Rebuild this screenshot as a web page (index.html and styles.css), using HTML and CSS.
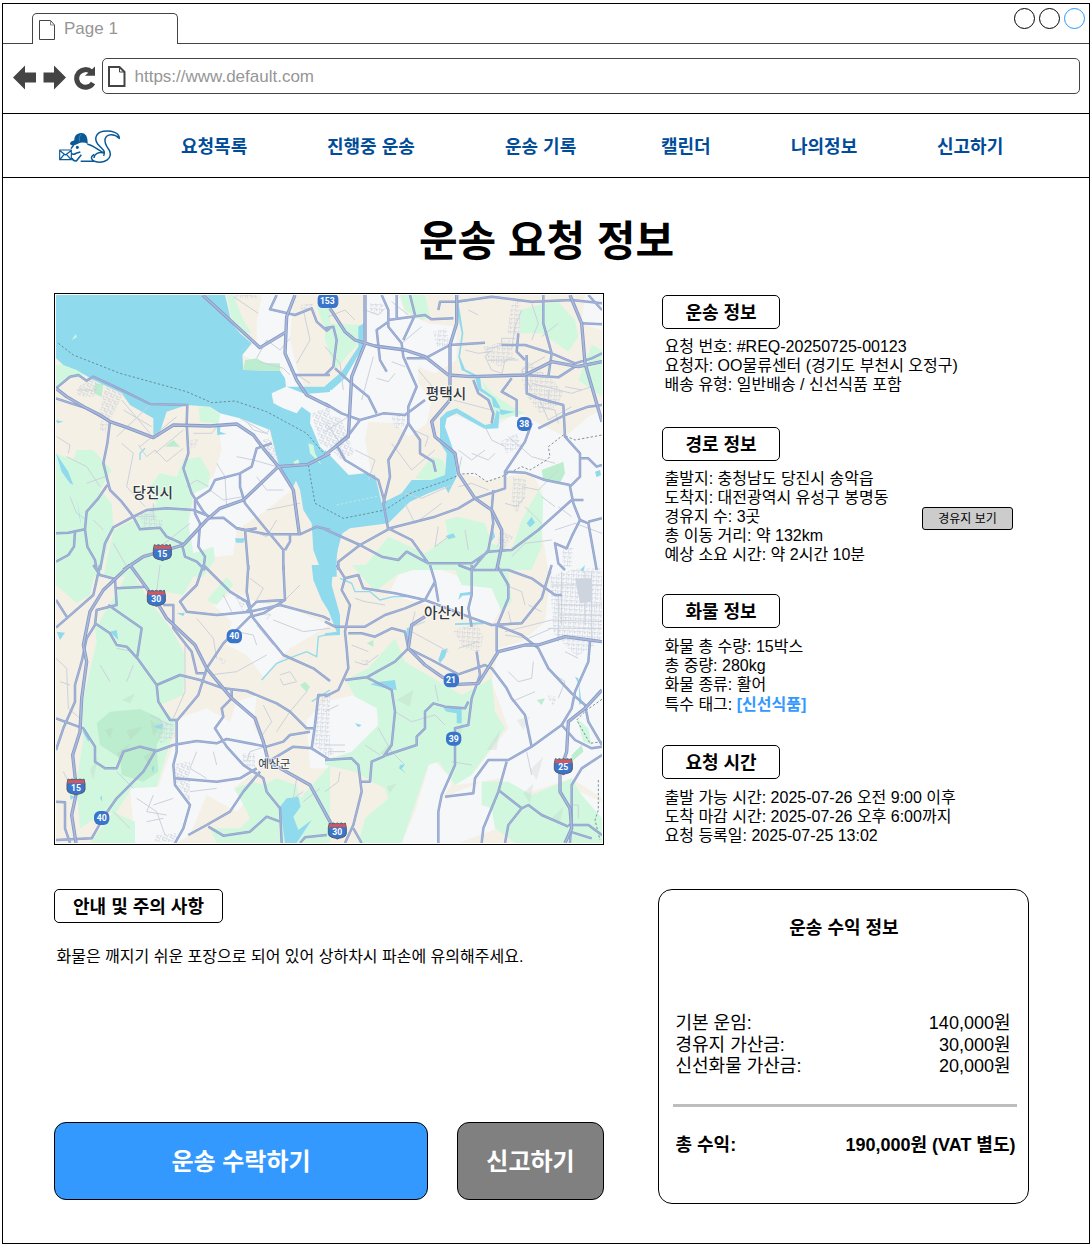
FILE: index.html
```html
<!DOCTYPE html>
<html lang="ko">
<head>
<meta charset="utf-8">
<title>운송 요청 정보</title>
<link rel="stylesheet" href="styles.css">
</head>
<body>
<div class="window">
  <header class="tabs">
    <div class="tabs-lead"></div>
    <div class="tab">
      <svg class="tab-icon" width="16" height="20" viewBox="0 0 16 20"><path d="M.5.5H11.500L15.500 5V19.500H.5Z"/><path class="fold" d="M11.500.5V5H15.500"/></svg>
      <span>Page 1</span>
    </div>
    <div class="window-controls"><i></i><i></i><i class="active"></i></div>
  </header>
  <div class="toolbar">
    <svg class="tool-icons" width="84" height="26" viewBox="0 0 84 26">
      <path d="M0 13.500L12 1.500V8.500H23V18.500H12V25.500Z"/>
      <path d="M53 13.500L41 1.500V8.500H30.500V18.500H41V25.500Z"/>
      <path class="reload" d="M80 19A8.800 8.800 0 1 1 78.500 8"/>
      <path d="M82 2.500V11.800H72Z"/>
    </svg>
    <div class="address">
      <svg class="page-icon" width="18" height="21" viewBox="0 0 18 21"><path d="M1 1H11.500L16.500 6V20H1Z"/><path class="fold" d="M11.500 1V6H16.500"/></svg>
      <span>https://www.default.com</span>
    </div>
  </div>
  <nav class="nav">
    <svg class="logo" width="64" height="38" viewBox="24 19 192 114">
      <path class="solid" d="M60 69C62 60 69 62 73 58C73 44 82 37 95 37C107 38 114 48 113 70C103 64 93 65 82 70C73 75 63 76 60 69Z"/>
      <path class="seam" d="M93 39Q86 49 88 63"/>
      <path d="M71 73L63 84M64 98Q70 104 78 98L91 94M66 112Q69 122 79 121L94 102M92 122H133Q116 112 132 101M112 71C132 74 142 88 162 97C146 93 133 99 132 112M133 122C168 132 186 111 179 91C171 78 163 70 165 56C170 39 192 38 208 53C208 35 182 28 160 32C139 36 131 53 143 70C155 85 169 89 161 106"/>
      <circle cx="82" cy="80" r="2.500"/>
      <path class="mail" d="M29 88H64V117H29ZM31 91L46 103L62 91M31 115L42 102M62 115L50 102"/>
    </svg>
    <a>요청목록</a><a>진행중 운송</a><a>운송 기록</a><a>캘린더</a><a>나의정보</a><a>신고하기</a>
  </nav>
  <h1>운송 요청 정보</h1>
  <main class="content">
    <div class="map">
      <svg width="546" height="548" viewBox="18 15 1638 1644" preserveAspectRatio="none">
        <defs>
          <pattern id="blocks" width="19" height="16" patternUnits="userSpaceOnUse" patternTransform="rotate(24)"><path class="block" d="M0 0H19M0 0V16M10 0V9H19"/></pattern>
          <pattern id="streets" width="15" height="13" patternUnits="userSpaceOnUse" patternTransform="rotate(4)"><path class="block" d="M0 0H15M0 0V13M7 0V8"/></pattern>
          <g id="interstate"><path class="shield" d="M-24 -24Q-18 -19 -12 -24Q-6 -19 0 -24Q6 -19 12 -24Q18 -19 24 -24L27 -10V8Q26 17 13 20Q5 21 0 24Q-5 21 -13 20Q-26 17 -27 8V-10Z"/><path class="shield-top" d="M-23 -23Q-12 -17 0 -23Q12 -17 23 -23L26 -11H-26Z"/></g>
          <g id="roads">
            <g>
              <path d="M680 15L660 58L735 75L785 55L800 95L830 122L840 115M735 255H840"/>
              <path d="M18 295L60 260L85 255L110 272L130 260L215 300L300 342L412 345L410 400L415 490L400 535L425 610L460 665L480 685L520 683L560 715L650 733L750 733L800 710L840 720"/>
              <path d="M18 325L110 355L180 395L172 460L160 520L180 600L215 635L250 680L270 718L330 713L350 740L395 760L405 800L440 815L465 840"/>
              <path d="M18 730L55 728L105 718L110 665L145 625L172 585M105 718L112 770L135 810L140 840M150 840L165 760L190 712L240 685L290 660L350 655L430 660L480 680"/>
              <path d="M665 460L620 475L605 530L570 550L495 570L480 600L435 630V670L450 700L445 770L465 800L460 840M570 550V590L585 640L650 720L700 780V840M560 715L585 720L620 715M585 720L595 840M720 735V755L705 780M18 815L55 795L72 770L75 725"/>
            </g>
            <g transform="translate(825 0)">
              <path d="M170 15L190 60V110L230 160L235 200L275 290L250 350V400L220 460L190 510L195 560L175 640L190 720M190 95L155 120L165 210L185 245M215 15V85M190 90L300 75L320 88L385 85M255 15L270 75L235 150"/>
              <path d="M340 60L345 35L395 35L500 20L620 35L740 30L831 40M375 165L480 158M375 165L300 205H245M530 165H600L680 190L750 220L800 205L831 190M655 15V100L680 190L670 260M600 255L700 262L750 230L831 215"/>
              <path d="M605 195V310L640 325L715 345L720 440L765 490V560L735 590L745 640L765 690L790 700L815 840M560 265L530 305L575 330V380M0 340L50 370L105 390L175 370L240 375L300 330M105 390L75 430L35 465L60 510L160 570L180 640"/>
              <path d="M30 235L80 280L130 320L155 370M0 115L25 110L35 150L25 230L0 255M250 400L285 450V490L325 515L332 545M620 400L600 455L540 545V595L450 625L400 655L330 680L195 715L105 765L40 815V840"/>
              <path d="M540 545L600 548L660 570L735 585M640 415L720 375L790 350L831 345M0 718L105 765L170 800L220 810L245 785L310 820L440 820L490 785M190 715L260 750L310 820M505 600L500 660L505 700L490 780L440 840"/>
              <path d="M490 785L560 780L640 720L740 630H775M765 690L740 740L725 775L690 760L700 820L720 840M790 695L831 685M445 270L460 310L490 330L505 370L500 400M580 130L575 185L600 210M770 100L831 103M790 15L831 60M768 505H790L815 530L831 525"/>
            </g>
            <g transform="translate(0 825)">
              <path d="M130 0L150 30L195 42L200 120L140 135L135 180L110 220L95 290L75 360V410L40 490L18 555M150 0L130 90L50 160L18 188M18 105L50 155M200 70L290 65"/>
              <path d="M175 120L275 190L262 275M135 175L180 205L200 240L230 245L262 280L320 360L325 410L360 465H380V560L370 600L375 660L420 720L400 790L375 834"/>
              <path d="M320 360L390 330L450 345L520 370L590 378L680 415L720 440L770 490H790M460 0L440 60L390 110L410 140L500 150L600 140L690 120L820 155L840 165M460 0L540 80L590 110L610 160L700 270L790 310L840 348"/>
              <path d="M595 0L590 80L605 150M700 0L705 105L620 110L590 140M705 105L640 145L600 155L520 235L470 310L445 390L380 468M340 120H370V190L425 260L440 325H470"/>
              <path d="M545 370V400L515 430L520 455L495 490L530 545L580 600L640 640L650 680L690 730L695 834M18 460L100 490L135 545V590L165 610L200 610L220 560L270 545L320 558L370 540L440 528L500 535L530 522L650 545L700 530L720 510L780 500"/>
              <path d="M375 640L500 650L570 640L620 610M315 560L280 620L200 700L165 750L125 820L18 825M18 710L45 712V790L60 834M630 620L580 680L540 740L470 780L415 810M475 785L520 812L600 800L650 755L690 770M655 590L730 545L785 550L840 585M840 390H805L795 480L785 550M750 834L765 817L830 810"/>
            </g>
            <g transform="translate(825 825)">
              <path d="M0 170L30 185H120L180 150L240 130L300 105L330 50L315 0M35 0L60 40L100 30L115 70L210 85L300 105L340 120L430 155L500 180L590 175L650 100L680 0M330 50L340 110"/>
              <path d="M60 40L50 75L75 120L60 200L65 250L70 310L40 375L0 395M70 205H110L150 215L200 190L240 200L250 250L210 290L125 337L60 345M250 250L320 285L400 328L480 300L500 310L545 370L560 400L600 450L620 545"/>
              <path d="M440 0V90L430 130L440 185M400 0L440 15H550L620 40L690 90H710M515 0L550 60V100L515 185V260M515 180L590 210L640 250L670 310L740 385L780 420L790 470L831 540"/>
              <path d="M455 260L465 330L440 400L430 480L390 490V600L350 690L340 740V834M360 695L445 685L450 640L490 585H550L620 545L710 480L740 430L750 380L790 290L795 230"/>
              <path d="M125 337L200 375L210 440L200 540L175 575L140 590L135 650H110M175 573L275 540V515L300 490V440L325 415L360 425L420 430L430 410M0 585L80 580L100 600L110 680L85 780L60 834"/>
              <path d="M545 590L520 680L475 790L470 834M520 675L590 730L550 780L540 834M590 730L610 720L650 750L730 785M831 570L770 610L740 660V760L735 834M730 780H790L831 810M710 480L750 525L800 550L831 545M735 800L800 820M85 790L110 834M0 745L30 790"/>
            </g>
          </g>
          <g id="highways">
            <path d="M458 15L630 173L710 125M735 15L710 80L705 190L740 270L770 315L840 350M18 295L50 320L110 355L150 375L180 395L230 412L310 443L370 405L480 408L560 402L610 435L640 475L690 535L730 600L748 733"/>
            <path d="M840 490L775 523L685 530L580 630L510 655L470 690L400 765L280 800L220 840"/>
            <path transform="translate(825 0)" d="M15 55L60 125L90 150L150 168L240 180L300 200L370 255L440 260L600 255L680 215L760 230L831 215M120 15V160L80 260L70 440L0 495M395 15V100L375 165V330L320 395L330 440L390 490L400 550L450 625L500 660L530 720V770L515 840M735 15L770 100L780 220L831 395"/>
            <path transform="translate(0 825)" d="M240 0L160 75L120 140L100 240L110 290L95 400L90 500L68 570L80 680L65 750L78 834M240 0L320 110L350 160L435 240L470 310L545 400L615 460L640 530L655 590L780 660L840 770"/>
            <path transform="translate(825 825)" d="M300 155L260 180L250 250L300 300L350 335L400 358L460 355L520 260L600 240H640L720 215L831 230M831 375L780 430L730 470L725 560L705 620V680L735 730L740 790L720 834"/>
          </g>
        </defs>
        <rect class="land" width="1680" height="1680"/>
        <g class="plain">
          <path d="M635 15H730L720 150L740 230L770 310H860V560L700 370L655 310L700 240L620 215L577 195L620 150V100ZM510 370L570 385L665 420L660 440L690 520L725 600L650 660L560 720L550 795L500 800L430 790L415 700L435 610L490 560L515 480L505 400Z"/>
          <g transform="translate(825 0)"><path d="M120 15H220L240 70L310 100L395 110V210L330 250L280 230L280 280L320 330L305 400L250 440L210 400L130 395L120 450L140 560L80 560L0 480V300L100 210ZM355 370L420 385L500 415L580 365L640 400L720 440L790 380L831 360V840H670L650 720V600L620 550L540 560L490 570L410 550L370 480Z"/><path d="M780 15H831V120L770 100Z"/></g>
          <g transform="translate(0 825)"><path d="M490 120L550 80L620 110L720 130L840 180L720 250L640 335L590 270L530 240L545 170ZM385 460L470 430L540 470L560 410L620 390L610 480L650 560L640 600L550 670L580 720L560 740L470 690L420 810L380 834H255L240 670L325 665L370 540ZM770 465L840 390V610H780Z"/></g>
          <g transform="translate(825 825)"><path d="M190 90L220 30L310 0L390 30L440 60L500 70L530 130L500 180L350 130ZM0 410L90 390L160 430L155 520L85 560L0 585ZM310 570L350 600L380 660L350 700L470 650L520 640L590 690L740 640L831 700V0H680L660 170L590 230L520 250L500 350L550 490L440 630ZM230 834L270 740L320 575L390 660L475 650L520 790L400 834ZM740 670L831 710V834H750Z"/></g>
        </g>
        <g class="green">
          <path d="M530 15H550L580 90L605 130L570 130L545 90ZM18 225L60 220L110 250L80 265L60 260L18 295ZM445 350L480 350L510 375L505 402L450 395ZM18 490L70 510L80 480L130 480L185 540L150 600L185 640L190 700L150 860H18ZM300 590L330 550L380 560L400 510L450 500L480 550L475 590L430 610L415 700L430 790L490 770L495 810L460 860H160L190 720L270 680L320 640ZM800 50L840 20V120L825 120Z"/>
          <g transform="translate(825 0)"><path d="M225 15H300L315 80L290 90L240 60ZM0 100L110 105L100 160L30 240L0 150ZM585 60L640 45L700 35L750 90L760 140L730 185L680 150L650 130L585 130ZM800 165L831 180V320L760 270ZM270 565L320 500L355 510L365 560L330 575ZM470 270L500 310L560 350L600 370L510 390L490 330ZM360 690L400 680L480 700L500 760L560 780L590 690L640 600L655 620L650 770L620 840H110L190 740L300 790L370 740Z"/></g>
          <g transform="translate(0 825)"><path d="M18 0H140L120 90L80 115L18 60ZM240 0H450L400 90L290 70ZM190 100L240 10L300 110L370 200L405 270L400 390L330 420L380 470L320 665L245 670L200 740L150 750L90 790L78 660L100 520L95 420L140 230L135 190ZM470 105L530 35L550 60L500 120ZM120 834L190 740L255 770V834ZM555 670L610 650L640 660L680 640L740 660L750 700L840 600V834H500L480 790L570 790L600 760Z"/></g>
          <g transform="translate(825 825)"><path d="M80 0H310L215 30L150 80ZM430 0L550 20L560 110L530 140L500 70L410 60L390 15ZM60 345L130 310L210 220L240 290L350 355L410 390L500 340L510 440L540 490L440 630L390 660L340 590L310 600L230 834H100L120 760L190 700L180 670L140 650L90 620L0 600V585L80 560L160 480L155 430L90 395ZM470 650L550 650L620 690L740 640L770 690L831 760V834H570L510 790L500 730L470 720ZM755 460L790 490L800 540L775 530Z"/></g>
        </g>
        <g class="park">
          <path d="M345 470L370 450L390 470ZM135 280L160 282L155 322L132 310Z"/>
          <g transform="translate(825 0)"><path d="M650 540L715 515L720 550L705 578L655 570Z"/></g>
          <g transform="translate(0 825)"><path d="M140 475L180 440L270 432L330 460L345 490L320 540L325 620L280 650L215 630L210 580L150 540ZM750 360L765 350L780 365L770 382Z"/></g>
          <g transform="translate(825 825)"><path d="M740 570L770 540L775 560L740 590ZM635 405L660 400L650 420ZM125 235L145 225V245Z"/></g>
        </g>
        <g class="relief"><path d="M215 1230L255 1210L240 1240ZM165 1320L190 1310L180 1345ZM230 1320L280 1310L240 1350ZM300 1290L330 1310L310 1340ZM200 1390L240 1360L210 1420ZM120 1440L145 1400L130 1470ZM280 1400L310 1380L300 1430ZM1040 1230L1090 1200L1080 1250ZM1310 1380L1350 1320L1340 1380ZM1210 1330L1240 1300L1230 1350ZM1400 1290L1440 1280L1420 1320ZM1440 1440L1480 1400L1460 1470ZM1010 1490L1040 1480L1020 1510ZM1420 1510L1450 1480L1440 1540ZM1500 1590L1540 1550L1530 1600ZM990 1390L1020 1360L1010 1400Z"/></g>
        <g class="water">
          <path d="M18 15H525L545 100L570 130L605 160L577 195L580 240L690 243L705 265L708 290L665 310L670 340L700 355L740 370L755 350L782 370L780 400L810 470L830 490L900 560L885 700L860 790V860H820L790 780L785 700L760 660L750 600L738 572L725 600L705 560L685 520L660 420L570 385L510 370L480 350L410 345L350 365L325 440H310V385L240 345L215 310L130 270L80 240L40 225L18 205ZM710 290H840V306L765 312Z"/>
          <path d="M18 490L55 545L70 585L60 580L35 545ZM80 625L95 710L88 680ZM500 400L512 405L510 425L530 432L502 435ZM555 745H585L580 758H558ZM18 390L40 395L22 400Z"/>
          <g transform="translate(825 0)"><path d="M0 480L70 555L120 550L150 555L170 640L230 610L260 570L320 570L360 555L365 490L345 460L345 385L365 365L395 355L430 375L480 405L505 400L515 360L530 375L570 365L535 360L505 350L500 325L460 300L450 260L410 240L400 200L410 130L395 60L400 30L525 18L400 38L405 65L415 130L405 200L420 238L465 260L470 295L510 325L525 350L520 415L480 417L430 390L395 370L365 385L360 410L385 480L395 560L370 610L360 590L310 610L255 635L190 700L75 715L45 735L35 800L0 860ZM0 300L0 288L50 245L100 170V110L116 100L114 170L60 265L20 300ZM605 700L620 680L630 698L615 712ZM362 738L385 730L392 742L370 748ZM500 700L510 740L495 760ZM810 545L825 540L828 555L815 562Z"/></g>
          <path d="M785 825H840V970L815 930L790 870ZM690 1550L710 1525L745 1520L752 1550L730 1580L745 1620L785 1590L740 1659H705ZM310 1310L340 1300L335 1318ZM380 970L405 968L400 978ZM20 1025L45 1028L30 1050ZM180 1025L200 1020L205 1050L195 1040ZM95 1320L122 1345L115 1355ZM305 1435L312 1425L310 1450ZM150 1525L155 1515L157 1535ZM60 1515L75 1520L62 1530Z"/>
          <g transform="translate(825 825)"><path d="M0 0H25L20 60L45 150L45 210L0 212V205L35 200L0 110ZM340 285L350 255L368 250L360 275L345 295ZM400 105L405 85L438 80L435 90L412 92ZM355 430H410V475L395 475V445L365 440ZM135 358L165 350L210 345L215 375L190 372ZM225 600L240 598L230 612L245 627L222 610ZM245 190L258 185L255 220L245 220ZM390 175L475 172V178L390 180ZM90 475L110 480L100 487ZM750 335L760 340L770 415L763 420L762 360ZM765 15L780 0L775 20Z"/></g>
          <path class="stream" d="M635 1170L680 1120L730 1100L770 1085L800 1100L805 1040L840 1032M870 865L905 880L915 905L960 905L990 930L1030 920L1070 920M270 510V490L285 475M785 1235L840 1200"/>
        </g>
        <path class="park" d="M580 240L585 210L620 205L645 220H690V243Z"/>
        <g class="green"><path d="M65 150L78 132L80 142ZM775 460L790 465L795 490L815 525L780 490ZM730 515L745 508L748 522L735 530Z"/></g>
        <g class="minor">
          <path d="M215 460L250 490L230 590L285 650M215 330L300 430M80 300L140 300M220 360L305 410M300 345L200 440M270 470L380 380M315 490L400 420M265 465L290 500L315 480L350 515L400 475M430 430H485L500 410M410 590L440 570L475 590M500 520L525 560L530 650M560 500L610 510L680 530M650 660L750 640M600 720L650 740L680 690M60 620L80 670L110 690M50 500L110 530L150 590M330 770L420 700M190 760L230 830M570 385L650 430L660 415M590 395L610 420L655 432M620 205L650 150L690 180L720 145M720 240L780 280M760 60L780 150L740 220M550 20L625 70M630 215L700 235L720 255M20 440L60 465L55 490M110 580L165 560M310 640V690M250 680H320M130 690L160 720M480 600L520 630L580 620M620 560L650 600L700 600"/>
          <g transform="translate(825 0)"><path d="M200 35L250 75M290 110L230 160M0 170L45 220L55 300M110 330L145 200M480 180L530 165V145H570M490 210H580M500 180L480 200L500 240L530 250M590 60L570 110L560 180M620 40L640 100L620 150M700 100L650 140M385 330L500 360M400 480L440 510L480 480M440 490L490 510L510 490M410 500L400 550M550 440L620 500L690 520M240 640L270 700L350 640M340 710L330 770L370 740M590 590L640 600L700 540M600 650L650 700M690 720L750 700L831 730M90 480L150 510L130 570M200 460L260 540L330 480M280 240L330 300L400 320M620 280L740 310L800 290M640 320L670 390L740 350M660 200L590 240L620 300M560 800L600 760L680 750M10 80L60 60L90 90M670 300V340M480 410L500 450L540 470M490 600L440 580L400 590M240 610L290 625L380 585M0 425L70 380M0 395L50 465M120 60L160 75L180 55M155 265L190 275L210 250M200 215L240 230M265 420L310 440L300 470M430 60L460 75M420 180L460 190L500 185M530 255L540 210L570 205M640 350L690 360L700 400M720 290L770 300M700 650L740 680M650 620L690 650M420 720L430 780M540 640L575 650L600 620"/></g>
          <g transform="translate(0 825)"><path d="M18 280L50 310L55 430L90 460M330 0L320 80M200 250L250 260M405 240V380L370 460M440 160L490 220L500 280M480 330L560 320L650 270M620 180L670 240M670 165L760 200L840 190M690 120L750 60M690 330L720 320L740 350L700 360L690 340M770 380L720 440L680 500M640 420L665 470L630 520M300 450L360 480M260 700L320 740L345 810M310 690L290 740L350 750M420 680L500 670M600 40L640 70L620 105M660 540L600 560L590 590M740 640L730 700L760 680M760 710L810 670M190 740L240 790M250 670L200 620M440 560L420 610L470 640M40 620L60 660M490 560L500 600M310 720L370 700M290 770L340 760M520 90L545 140M560 200L610 210L620 240M150 300L180 350M250 300L230 350M30 350L60 360"/></g>
          <g transform="translate(825 825)"><path d="M90 100L120 110L180 120M250 190L300 170M260 200L370 260M270 140L250 230M400 250L460 230M540 200L680 165L831 170M540 210L610 220L680 190M550 140L560 180M610 120L650 140M550 320L580 350L620 340L625 290M630 380L560 410M605 560L620 630M210 440L260 470L330 450L360 480M160 490L200 560L240 600M120 540L165 570M380 590L440 600M0 680L40 650L45 620M330 360L340 410M0 540H60M10 560H60M700 90V230M710 20V180M700 120H831M700 150H831M680 60H831M670 190H831M800 20V230M780 20V180M680 20L660 60M740 720H760V760M90 290L120 300L160 270M80 240L130 260M540 60L590 80L600 120M720 260L760 280M690 330L720 350L700 400M0 440L40 420"/></g>
        </g>
        <g class="city-a"><path d="M90 285L130 268L145 285L130 320L80 318ZM165 285L220 310L180 390L150 365ZM785 370L840 350V480L810 460ZM635 450L660 445L690 515L660 510ZM380 1420L420 1415L420 1540L370 1460ZM555 920L590 930L580 965ZM315 1635L380 1630V1655H315ZM825 380L870 380L915 490L870 510L825 450ZM1350 720L1390 740L1360 780L1340 770Z"/></g>
        <g class="city-b"><path d="M270 670L310 655L320 690L340 690L335 715L280 715ZM150 390L175 400L165 430L150 420ZM420 450L445 448L435 475H420ZM555 15H620V25H555ZM750 45L790 40L780 60H755ZM960 40H1000V70H960ZM1150 125L1190 115L1200 170H1160ZM1025 380L1070 370L1060 410L1035 415ZM1350 455L1400 430L1415 470L1370 490ZM1385 40L1410 30V140L1370 130ZM1300 170L1380 150L1390 200L1350 230L1310 210ZM1430 210L1510 270L1540 310L1520 350L1470 370L1430 320L1410 250ZM1390 560L1430 570L1425 620L1400 670L1385 640ZM1535 780L1570 770L1565 830H1540ZM790 1300L815 1220H840V1400L795 1370ZM575 1390H615V1430H580ZM320 1290L370 1300L375 1340L330 1360ZM1210 1020L1280 1000L1300 1040L1290 1085L1240 1075ZM1500 860L1580 835H1656V1050L1580 1100L1510 1030ZM640 960L665 975L650 990ZM500 1100L530 1110L520 1125ZM825 1370H850V1400H825ZM1490 1215L1520 1220L1510 1250ZM935 1110L955 1110V1125H935Z"/></g>
        <path class="downtown" d="M1575 865H1625V935L1590 940Z"/>
        <path class="ferry" d="M25 160L70 195L210 250L410 305L485 338L555 333L650 365L770 430L830 500M775 525L795 640L880 685L1005 660L1085 608L1180 575L1235 552L1275 550L1310 575L1355 560L1415 530L1440 540L1490 510L1500 500L1495 470L1540 435L1575 450L1656 435"/>
        <path class="ferry pale" d="M860 645L1000 615"/>
        <path class="ferry" d="M1656 1228L1610 1260L1580 1290L1620 1360L1656 1355M1645 1470V1560L1635 1590L1650 1650"/>
        <use href="#roads" class="road-edge"/><use href="#roads" class="road-core"/>
        <use href="#highways" class="highway-edge"/><use href="#highways" class="highway-core"/>
        <g class="shields">
          <rect x="803" y="12" width="62" height="42" rx="14"/><text x="832" y="43">153</text>
          <rect x="1401" y="381" width="44" height="42" rx="17"/><text x="1423" y="411">38</text>
          <rect x="530" y="1018" width="46" height="42" rx="17"/><text x="553" y="1048">40</text>
          <rect x="132" y="1563" width="46" height="42" rx="17"/><text x="155" y="1593">40</text>
          <rect x="1181" y="1150" width="46" height="42" rx="17"/><text x="1203" y="1180">21</text>
          <rect x="1188" y="1325" width="46" height="42" rx="17"/><text x="1211" y="1355">39</text>
          <use href="#interstate" x="337" y="788"/><text x="337" y="800">15</text>
          <use href="#interstate" x="319" y="925"/><text x="319" y="936">30</text>
          <use href="#interstate" x="78" y="1491"/><text x="78" y="1502">15</text>
          <use href="#interstate" x="862" y="1623"/><text x="862" y="1634">30</text>
          <use href="#interstate" x="1540" y="1430"/><text x="1540" y="1441">25</text>
        </g>
        <g class="places">
          <text x="308" y="624">당진시</text><text x="1188" y="326">평택시</text><text x="1183" y="985">아산시</text><text class="county" x="673" y="1433">예산군</text>
        </g>
      </svg>
    </div>
    <div class="details">
      <section class="shipping">
        <h2 class="badge">운송 정보</h2>
        <div class="lines"><p>요청 번호: #REQ-20250725-00123</p><p>요청자: OO물류센터 (경기도 부천시 오정구)</p><p>배송 유형: 일반배송 / 신선식품 포함</p></div>
      </section>
      <section class="route">
        <h2 class="badge">경로 정보</h2>
        <div class="route-body">
          <div class="lines"><p>출발지: 충청남도 당진시 송악읍</p><p>도착지: 대전광역시 유성구 봉명동</p><p>경유지 수: 3곳</p><p>총 이동 거리: 약 132km</p><p>예상 소요 시간: 약 2시간 10분</p></div>
          <button class="stops">경유지 보기</button>
        </div>
      </section>
      <section class="cargo">
        <h2 class="badge">화물 정보</h2>
        <div class="lines"><p>화물 총 수량: 15박스</p><p>총 중량: 280kg</p><p>화물 종류: 활어</p><p class="tagged">특수 태그: <b>[신선식품]</b></p></div>
      </section>
      <section class="schedule">
        <h2 class="badge">요청 시간</h2>
        <div class="lines"><p>출발 가능 시간: 2025-07-26 오전 9:00 이후</p><p>도착 마감 시간: 2025-07-26 오후 6:00까지</p><p>요청 등록일: 2025-07-25 13:02</p></div>
      </section>
    </div>
    <div class="lower">
      <section>
        <h2 class="badge wide">안내 및 주의 사항</h2>
        <p class="notice">화물은 깨지기 쉬운 포장으로 되어 있어 상하차시 파손에 유의해주세요.</p>
      </section>
      <div class="actions"><button class="accept">운송 수락하기</button><button class="report">신고하기</button></div>
    </div>
    <section class="income">
      <h2>운송 수익 정보</h2>
      <dl class="fees">
        <div><dt>기본 운임:</dt><dd>140,000원</dd></div>
        <div><dt>경유지 가산금:</dt><dd>30,000원</dd></div>
        <div><dt>신선화물 가산금:</dt><dd>20,000원</dd></div>
      </dl>
      <div class="total"><span>총 수익:</span><span>190,000원 (VAT 별도)</span></div>
    </section>
  </main>
</div>
</body>
</html>
```
FILE: styles.css
```css
* { box-sizing: border-box; }
body { margin: 0; background: #fff; color: #000; font-family: "Liberation Sans", "Noto Sans CJK KR", sans-serif; }
h1, h2, p, dl, dd { margin: 0; }
button { font-family: inherit; padding: 0; }
.window { width: 1088px; height: 1241px; margin: 3px 0 0 2px; border: 1px solid #000; }

.tabs { display: flex; height: 40px; }
.tabs-lead { width: 29px; border-bottom: 1px solid #444; }
.tab { display: flex; gap: 9px; width: 146px; height: 31px; margin-top: 9px; padding: 6px 0 0 6px; border: 1px solid #444; border-bottom: 0; border-radius: 5px 5px 0 0; color: #969696; font-size: 17px; line-height: 18px; }
.tab-icon, .page-icon { fill: none; stroke: #444; flex: none; }
.tab-icon .fold { stroke: #888; }
.window-controls { flex: 1; display: flex; justify-content: flex-end; gap: 4px; padding: 4px 4px 0 0; border-bottom: 1px solid #444; }
.window-controls i { width: 21px; height: 21px; border: 1px solid #000; border-radius: 50%; }
.window-controls .active { border-color: #2a97ff; }
.toolbar { display: flex; height: 70px; padding: 14px 9px 0 10px; border-bottom: 1px solid #000; }
.tool-icons { flex: none; margin: 6px 5px 0 0; fill: #444; }
.tool-icons .reload { fill: none; stroke: #444; stroke-width: 5; }
.address { flex: 1; display: flex; align-items: center; gap: 8.5px; height: 36px; padding-left: 5px; border: 1px solid #444; border-radius: 5px; color: #969696; font-size: 17px; }
.address span { padding-top: 2px; }
.page-icon { stroke-width: 2; }
.page-icon .fold { stroke-width: 1; }

.nav { display: grid; grid-template-columns: 123px 146px 178px 156px 130px 146px auto; align-items: center; height: 64px; padding-left: 55px; border-bottom: 1px solid #000; color: #004c99; font-size: 18px; font-weight: 700; }
.logo { fill: none; stroke: #0b5a96; stroke-width: 4.5; stroke-linejoin: round; }
.logo .solid { fill: #0b5a96; stroke: none; }
.logo .seam { stroke: #5b93bd; stroke-width: 2; }
.logo .mail { stroke-width: 3.5; }
.nav a { padding-top: 2px; line-height: 22px; }
h1 { height: 115px; padding: 33px 0 0 1px; text-align: center; font-size: 42px; line-height: 62px; }

.content { display: grid; grid-template-columns: 550px 371px; grid-template-rows: 552px 315px; column-gap: 54px; row-gap: 44px; padding-left: 51px; }
.map { padding: 1px; border: 1px solid #000; }
.map svg { display: block; }
.badge { display: flex; align-items: center; justify-content: center; width: 118px; height: 34px; padding-top: 2px; border: 1px solid #000; border-radius: 5px; font-size: 18px; line-height: 22px; }
.wide { width: 169px; }
.details { padding: 2px 0 0 4px; }
.shipping { height: 132px; }
.route { height: 167px; }
.cargo { height: 151px; }
.lines { padding: 8px 0 0 2.5px; font-size: 16px; white-space: nowrap; }
.lines p { height: 19px; line-height: 19px; }
.cargo .lines, .schedule .lines { padding-top: 9px; }
.lines .tagged { height: 20px; line-height: 21px; }
.lines b { color: #3399ff; }
.route-body { display: flex; justify-content: space-between; padding-right: 16px; }
.stops { width: 91px; height: 23px; margin-top: 46px; padding-bottom: 2px; border: 1px solid #000; border-radius: 3px; background: #ccc; color: #000; font-size: 12px; }
.lower { display: flex; flex-direction: column; justify-content: space-between; height: 311px; }
.notice { padding: 24px 0 0 2.5px; font-size: 16px; line-height: 20px; white-space: nowrap; }
.actions { display: flex; gap: 29px; height: 78px; }
.actions button { padding-bottom: 4px; border: 1px solid #000; border-radius: 12px; color: #fff; font-size: 24px; font-weight: 700; }
.accept { width: 374px; background: #3399ff; }
.report { width: 147px; background: #808080; }
.income { padding: 27px 11px 0 14px; border: 1px solid #000; border-radius: 14px; font-size: 18px; }
.income h2 { padding-right: 2px; text-align: center; font-size: 18px; line-height: 22px; }
.fees { height: 94px; margin-top: 74px; border-bottom: 3px solid #bdbdbd; }
.fees div { display: flex; justify-content: space-between; padding: 0 6.5px 0 2.5px; line-height: 21.5px; }
.total { display: flex; justify-content: space-between; padding: 27px 1.5px 0 2.5px; font-weight: 700; line-height: 22px; }

.land { fill: #f5f0e5; }
.plain { fill: #f6f7f8; }
.green { fill: #d2f7df; }
.park { fill: #bdedcf; }
.relief { fill: #a9bdb3; opacity: .18; }
.water { fill: #90daee; }
.stream { fill: none; stroke: #90daee; stroke-width: 4; }
.block { fill: none; stroke: #c8cfdb; stroke-width: 2.5; }
.city-a { fill: url(#blocks); }
.city-b { fill: url(#streets); }
.downtown { fill: #cfd5df; }
.minor { fill: none; stroke: #ccd2dc; stroke-width: 3; stroke-linejoin: round; }
.ferry { fill: none; stroke: #637d88; stroke-width: 2.5; stroke-dasharray: 7 6; }
.pale { stroke: #c5ece9; }
.road-edge, .road-core, .highway-edge, .highway-core { fill: none; stroke-linejoin: round; }
.road-edge { stroke: #8fa1ca; stroke-width: 7.5; }
.road-core { stroke: #a2b3d8; stroke-width: 4; }
.highway-edge { stroke: #8799c4; stroke-width: 10; }
.highway-core { stroke: #a9b9db; stroke-width: 5; }
.shields rect { fill: #3975cb; }
.shield { fill: #3975cb; stroke: #515a6a; stroke-width: 3; }
.shield-top { fill: #cd5960; }
.shields text { fill: #fff; font: 700 26px Roboto, sans-serif; text-anchor: middle; }
.places text { fill: #333940; stroke: #fff; stroke-width: 5; stroke-opacity: .75; paint-order: stroke; font: 500 44px "Noto Sans CJK KR", sans-serif; text-anchor: middle; }
.places .county { font-size: 35px; font-weight: 400; }
```
